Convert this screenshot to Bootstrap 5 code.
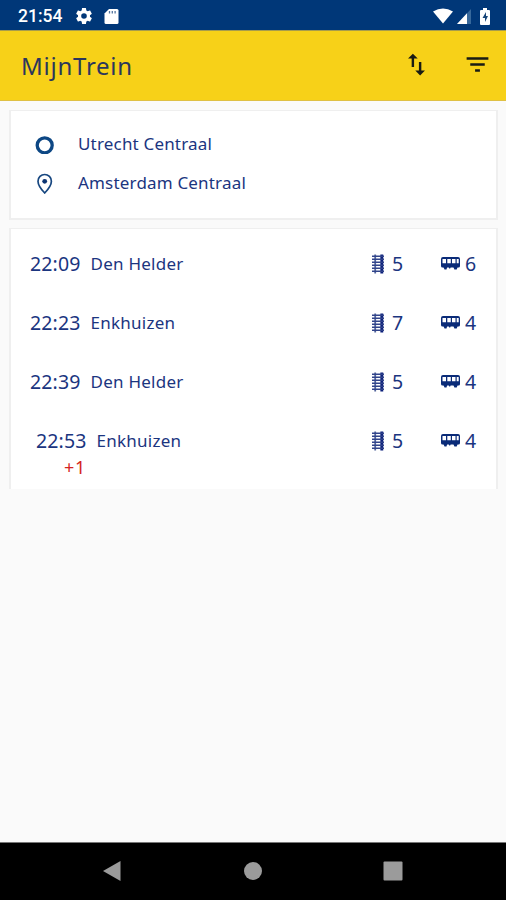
<!DOCTYPE html>
<html lang="nl">
<head>
<meta charset="utf-8">
<meta name="viewport" content="width=device-width, initial-scale=1">
<title>MijnTrein</title>
<link rel="stylesheet" href="https://cdn.jsdelivr.net/npm/bootstrap@5.3.0/dist/css/bootstrap.min.css">
<style>
body{background:#fafafa;color:#1b357f;font-family:"Noto Sans",sans-serif;height:900px;overflow:hidden}
svg{display:block;flex:none}
.status{height:30px;background:#003778;color:#fff;font:500 17.5px/30px Roboto,sans-serif;padding:2px 15px 0 18px}
.status .clock{width:58px}
.appbar{height:71px;background:#f7d118;border-bottom:1px solid #dfc044;border-top:1px solid #a79c4c;padding:0 14px 0 21px}
.appbar h1{font-size:24px;line-height:32px;letter-spacing:.75px;color:#2b365c}
.appbar svg{margin-top:-3px}
.panel{background:#fff;margin:0 8px 0 9px;border:1px solid #efefef;border-width:1px 2px}
.route{margin-top:9px;height:110px;padding:13px 0 0 24px;border-bottom-width:2px}
.stop{height:39px;font-size:17px;line-height:39px;letter-spacing:.18px}
.stop svg{margin-right:23px}
.trips{margin-top:8px;height:261px;padding:5px 20px 0 19px;border-bottom:0}
.trip{height:59px;line-height:59px}
.late{padding-left:6px;height:59px}
.hour{font-size:19.5px;width:60.5px;letter-spacing:.15px}
.dest{font-size:17px;letter-spacing:.25px}
.num{font-size:19.5px;width:11px}
.delay{color:#d42222;font-size:18px;line-height:20px;padding-left:34px;margin-top:-13px;letter-spacing:.8px}
.track{width:69px}
.sysnav{height:58px;background:#000;border-top:1px solid #777;padding:0 2px 2px 0}
</style>
<script src="https://cdn.jsdelivr.net/npm/bootstrap@5.3.0/dist/js/bootstrap.bundle.min.js"></script>
</head>
<body class="d-flex flex-column">
<svg width="0" height="0" class="position-absolute"><defs>
<symbol id="rail" viewBox="0 0 12 20"><path d="M3.200 .5v19" stroke="#52649b" stroke-width="1.800"/><path d="M9.800 .5v19" stroke="#0b1f7a" stroke-width="2.900"/><path d="M0 2.300h12M0 5.300h12M0 8.300h12M0 11.300h12M0 14.300h12M0 17.300h12" stroke="#31448b" stroke-width="1.400"/></symbol>
<symbol id="coach" viewBox="0 0 19 13"><path fill="#0a2b78" fill-rule="evenodd" d="M2 0h15q2 0 2 2v7q0 1.500-1.500 1.500h-16Q0 10.500 0 9V2Q0 0 2 0ZM1.500 2v4.300h3.500V2ZM6.300 2v4.300h3.500V2ZM11 2v4.300h3.500V2ZM15.700 2v4.300h2V2Z"/><path fill="#0a2b78" d="M2 9h4.500L5.500 12.500h-2ZM7.500 9h2.500l-.8 2.500h-1ZM12 9h5l-1.300 3.500h-2.300Z"/></symbol>
</defs></svg>

<header class="status d-flex align-items-center">
  <span class="clock">21:54</span>
  <svg width="16" height="16" viewBox="2 2 20 20" fill="#fff"><path d="M19.430 12.980c.04-.32.07-.64.07-.98s-.03-.66-.07-.98l2.110-1.650c.19-.15.24-.42.12-.64l-2-3.460c-.12-.22-.39-.3-.61-.22l-2.490 1c-.52-.4-1.080-.73-1.690-.98l-.38-2.650A.49.49 0 0 0 14 2h-4c-.25 0-.46.18-.49.42l-.38 2.650c-.61.25-1.170.59-1.690.98l-2.490-1c-.23-.09-.49 0-.61.22l-2 3.460c-.13.22-.07.49.12.64l2.110 1.650c-.04.32-.07.65-.07.98s.03.66.07.98l-2.110 1.650c-.19.15-.24.42-.12.64l2 3.460c.12.22.39.3.61.22l2.490-1c.52.4 1.080.73 1.690.98l.38 2.650c.03.24.24.42.49.42h4c.25 0 .46-.18.49-.42l.38-2.650c.61-.25 1.170-.59 1.690-.98l2.490 1c.23.09.49 0 .61-.22l2-3.460c.12-.22.07-.49-.12-.64ZM12 15.500a3.500 3.500 0 1 1 0-7 3.500 3.500 0 0 1 0 7Z"/></svg>
  <svg class="ms-2 ps-1" width="19" height="17" viewBox="0 0 15 17"><path d="M5 1h8q1.500 0 1.500 1.500v12Q14.500 16 13 16H2Q.5 16 .5 14.500v-9Z" fill="#fff"/><path d="M5.500 3v2.500M8.300 3v2.500M11.100 3v2.500" stroke="#54769f" stroke-width="1.300"/></svg>
  <div class="ms-auto d-flex align-items-center">
    <svg width="20" height="16" viewBox="0 0 20 16"><path d="M0 3.500Q10-2.500 20 3.500L10 15.500Z" fill="#fff"/></svg>
    <svg class="ms-1" width="14" height="15" viewBox="0 0 14 15"><path d="M14 0v15H0Z" fill="#37689b"/><path d="M10 4.300V15H0Z" fill="#fff"/></svg>
    <svg class="ms-2" width="12" height="17" viewBox="0 0 12 17"><path d="M4 0h4v2h2q1 0 1 1v13q0 1-1 1H2q-1 0-1-1V3q0-1 1-1h2Z" fill="#fff"/><path d="M7 4 3.500 10H6v4l3-6H7Z" fill="#174578"/></svg>
  </div>
</header>

<nav class="appbar d-flex align-items-center">
  <h1 class="fw-normal mb-0 me-auto">MijnTrein</h1>
  <svg width="29" height="29" viewBox="0 0 24 24" fill="#191b13" class="me-4"><path d="M16 17.010V10h-2v7.010h-3L15 21l4-3.990ZM9 3 5 6.990h3V14h2V6.990h3Z"/></svg>
  <svg width="29" height="29" viewBox="0 0 24 24" fill="#191b13" class="ms-2"><path d="M10 18h4v-2h-4ZM3 6v2h18V6Zm3 7h12v-2H6Z"/></svg>
</nav>

<section class="panel route">
  <div class="stop d-flex align-items-center"><svg width="20" height="20" viewBox="0 0 20 20"><circle cx="9.700" cy="11.300" r="7.500" fill="none" stroke="#0d4784" stroke-width="3.300"/></svg><span>Utrecht Centraal</span></div>
  <div class="stop d-flex align-items-center"><svg width="20" height="22" viewBox="0 0 20 22"><path d="M9.700 21Q3 14 3 9.200a6.700 6.700 0 0 1 13.400 0Q16.400 14 9.700 21Z" fill="none" stroke="#174780" stroke-width="1.700"/><circle cx="9.700" cy="9.300" r="2.400" fill="#0b3472"/></svg><span>Amsterdam Centraal</span></div>
</section>

<main class="panel trips">
  <div class="trip d-flex align-items-center"><span class="hour">22:09</span><span class="dest me-auto">Den Helder</span><div class="track d-flex align-items-center"><svg width="12" height="20" class="me-2"><use href="#rail"/></svg><span class="num">5</span></div><svg width="20" height="13" class="me-1"><use href="#coach" width="19" height="13"/></svg><span class="num">6</span></div>
  <div class="trip d-flex align-items-center"><span class="hour">22:23</span><span class="dest me-auto">Enkhuizen</span><div class="track d-flex align-items-center"><svg width="12" height="20" class="me-2"><use href="#rail"/></svg><span class="num">7</span></div><svg width="20" height="13" class="me-1"><use href="#coach" width="19" height="13"/></svg><span class="num">4</span></div>
  <div class="trip d-flex align-items-center"><span class="hour">22:39</span><span class="dest me-auto">Den Helder</span><div class="track d-flex align-items-center"><svg width="12" height="20" class="me-2"><use href="#rail"/></svg><span class="num">5</span></div><svg width="20" height="13" class="me-1"><use href="#coach" width="19" height="13"/></svg><span class="num">4</span></div>
  <div class="trip late d-flex align-items-center"><span class="hour">22:53</span><span class="dest me-auto">Enkhuizen</span><div class="track d-flex align-items-center"><svg width="12" height="20" class="me-2"><use href="#rail"/></svg><span class="num">5</span></div><svg width="20" height="13" class="me-1"><use href="#coach" width="19" height="13"/></svg><span class="num">4</span></div>
  <div class="delay">+1</div>
</main>

<footer class="sysnav mt-auto d-flex justify-content-center align-items-center">
  <svg width="20" height="22" viewBox="0 0 20 22"><path d="M1 11 18.500 1v20Z" fill="#9b9b9b"/></svg>
  <svg width="261" height="20" viewBox="0 0 261 20"><circle cx="131" cy="10" r="9" fill="#9b9b9b"/></svg>
  <svg width="20" height="20" viewBox="0 0 20 20"><rect x=".5" y=".5" width="19" height="19" rx="1" fill="#9b9b9b"/></svg>
</footer>
</body>
</html>
